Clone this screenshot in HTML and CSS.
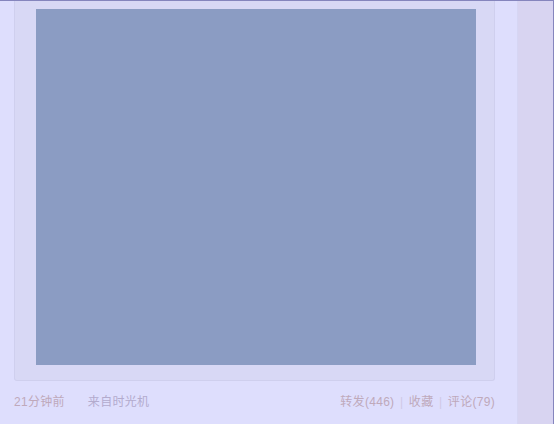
FILE: index.html
```html
<!DOCTYPE html>
<html lang="zh">
<head>
<meta charset="utf-8">
<link rel="stylesheet" href="styles.css">
</head>
<body>
<div class="page">
  <div class="main">
    <div class="media-box">
      <div class="media"></div>
    </div>
    <div class="footer">
      <div class="meta">
        <span class="time">21分钟前</span>
        <span class="source">来自时光机</span>
      </div>
      <div class="actions">
        <span class="act">转发(446)</span>
        <span class="sep">|</span>
        <span class="act">收藏</span>
        <span class="sep">|</span>
        <span class="act">评论(79)</span>
      </div>
    </div>
  </div>
  <div class="side"></div>
</div>
</body>
</html>
```
FILE: styles.css
```css
html, body {
  margin: 0;
  padding: 0;
  width: 554px;
  height: 424px;
  overflow: hidden;
  background: #dedefd;
  font-family: "Liberation Sans", "Noto Sans CJK SC", sans-serif;
}
.page {
  display: flex;
  height: 424px;
  border-top: 1px solid #8585bd;
  box-sizing: border-box;
}
.main {
  width: 518px;
  padding: 0 22px 0 14px;
  box-sizing: border-box;
  background: #dedefd;
  border-right: 1px solid #d6d6f4;
}
.media-box {
  background: #d8d8f5;
  border: 1px solid #cfcfee;
  border-top: none;
  border-radius: 0 0 3px 3px;
  padding: 8px 18px 15px 21px;
  height: 356px;
  box-sizing: content-box;
}
.media {
  width: 440px;
  height: 356px;
  background: #8b9cc3;
}
.footer {
  display: flex;
  justify-content: space-between;
  align-items: center;
  margin-top: 13px;
  height: 16px;
  font-size: 12px;
  line-height: 16px;
  letter-spacing: 0.3px;
}
.meta {
  display: flex;
  gap: 23px;
}
.time {
  color: #bfa9bb;
}
.source {
  color: #b3abcd;
}
.actions {
  display: flex;
  gap: 5.5px;
  color: #bfa9bb;
}
.sep {
  color: #cfc9e6;
}
.side {
  flex: 1;
  background: #d8d4f1;
  border-right: 1px solid #8585bd;
}
```
